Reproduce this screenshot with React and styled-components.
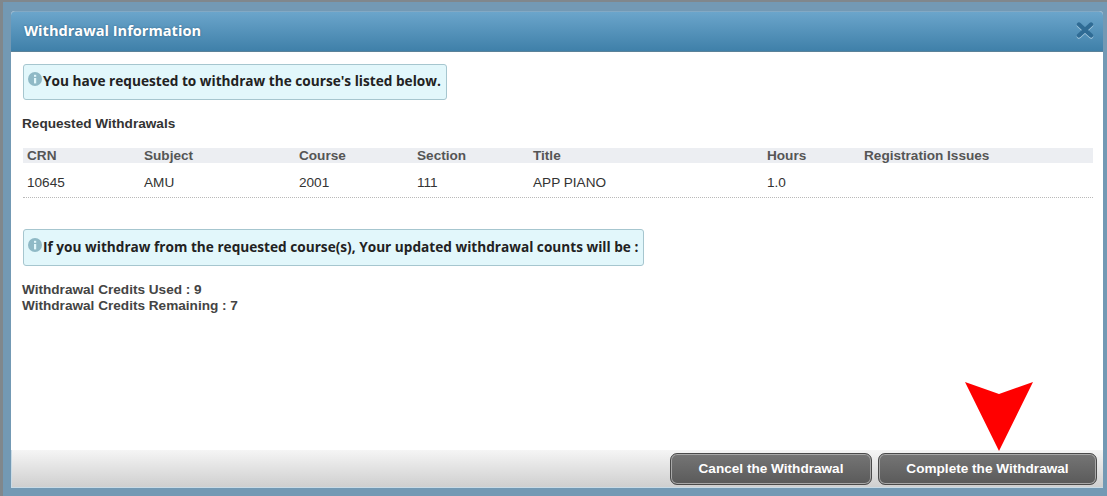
import React from "react"
import styled, { createGlobalStyle } from "styled-components"

const columns = [
    {title: "CRN", value: "10645", width: 117},
    {title: "Subject", value: "AMU", width: 155},
    {title: "Course", value: "2001", width: 118},
    {title: "Section", value: "111", width: 116},
    {title: "Title", value: "APP PIANO", width: 234},
    {title: "Hours", value: "1.0", width: 97},
    {title: "Registration Issues", value: "", width: 233},
]

const GlobalStyle = createGlobalStyle`
    html, body {
        margin: 0;
        padding: 0;
        overflow: hidden;
        background: #7399b4;
    }
`

function InfoIcon() {
    return (
        <Icon viewBox="0 0 14 14">
            <circle cx="7" cy="7" r="7" fill="#8fb9c6" />
            <rect x="6" y="6" width="2.2" height="5.4" fill="#e2f7fb" />
            <rect x="6" y="2.8" width="2.2" height="2" fill="#e2f7fb" />
        </Icon>
    )
}

export default function App() {
    return (
        <Page>
            <GlobalStyle />
            <Dialog>
                <Header>
                    <Title>Withdrawal Information</Title>
                    <CloseIcon viewBox="0 0 18 16">
                        <path d="M3 2.5 L15 13.5 M15 2.5 L3 13.5" stroke="#2f6b94" strokeWidth="4.4" strokeLinecap="round" />
                    </CloseIcon>
                </Header>
                <Body>
                    <Notice>
                        <InfoIcon />
                        <NoticeText>You have requested to withdraw the course's listed below.</NoticeText>
                    </Notice>
                    <SectionTitle>Requested Withdrawals</SectionTitle>
                    <Table>
                        <HeadRow>
                            {columns.map((item, index) => (
                                <HeadCell key={index} $width={item.width}>{item.title}</HeadCell>
                            ))}
                        </HeadRow>
                        <DataRow>
                            {columns.map((item, index) => (
                                <DataCell key={index} $width={item.width}>{item.value}</DataCell>
                            ))}
                        </DataRow>
                    </Table>
                    <SecondNotice>
                        <InfoIcon />
                        <NoticeText>If you withdraw from the requested course(s), Your updated withdrawal counts will be :</NoticeText>
                    </SecondNotice>
                    <Credits>
                        <div>Withdrawal Credits Used : 9</div>
                        <div>Withdrawal Credits Remaining : 7</div>
                    </Credits>
                </Body>
                <Footer>
                    <ActionButton $width={202}>Cancel the Withdrawal</ActionButton>
                    <ActionButton $width={219}>Complete the Withdrawal</ActionButton>
                </Footer>
                <Arrow viewBox="0 0 68 69">
                    <polygon points="0,0 34,12 68,0 34,69" fill="#ff0000" />
                </Arrow>
            </Dialog>
        </Page>
    )
}

const Page = styled.div`
    width: 1107px;
    height: 496px;
    box-sizing: border-box;
    padding: 9px 4px 8px 8px;
    background: #7399b4;
    border-top: 2px solid #80878c;
    border-left: 3px solid #80878c;
    font-family: "Liberation Sans", Arial, sans-serif;
`
const Dialog = styled.div`
    position: relative;
    display: flex;
    flex-direction: column;
    height: 100%;
    background: #ffffff;
    border-radius: 4px 4px 0 0;
`
const Header = styled.div`
    display: flex;
    align-items: center;
    justify-content: space-between;
    height: 41px;
    box-sizing: border-box;
    padding: 0 9px 0 13px;
    background: linear-gradient(#6ba5cb, #3f80a9);
    border-top: 1px solid #83a9c4;
    border-bottom: 1px solid #5b8299;
    border-radius: 4px 4px 0 0;
`
const Title = styled.div`
    margin-top: -3px;
    color: #ffffff;
    font-family: "Open Sans", "DejaVu Sans", sans-serif;
    font-size: 14.6px;
    font-weight: 700;
    text-shadow: 0 0 2px rgba(30, 70, 100, 0.6);
`
const CloseIcon = styled.svg`
    width: 18px;
    height: 16px;
    margin-top: -3px;
    filter: drop-shadow(0 1px 0 #a9cbe0);
`
const Body = styled.div`
    flex: 1;
    padding: 12px 10px 0 11px;
    color: #222222;
    font-size: 13.6px;
`
const Notice = styled.div`
    display: inline-flex;
    align-items: center;
    height: 36px;
    box-sizing: border-box;
    margin-left: 1px;
    padding: 0 5px 3px 4px;
    background: #e2f7fb;
    border: 1px solid #a6c6cf;
    border-radius: 3px;
`
const SecondNotice = styled(Notice)`
    height: 37px;
    margin-top: 31px;
`
const Icon = styled.svg`
    flex: none;
    width: 14px;
    height: 14px;
    margin-top: -3px;
    margin-right: 1px;
`
const NoticeText = styled.span`
    color: #222222;
    font-family: "Open Sans", "DejaVu Sans", sans-serif;
    font-size: 13.65px;
    font-weight: 700;
    white-space: nowrap;
`
const SectionTitle = styled.div`
    margin-top: 17px;
    height: 14px;
    line-height: 14px;
    font-weight: bold;
    color: #333333;
`
const Table = styled.div`
    margin: 17px 0 0 1px;
    width: 1070px;
`
const HeadRow = styled.div`
    display: flex;
    align-items: center;
    height: 15px;
    background: #eceef2;
`
const DataRow = styled.div`
    display: flex;
    align-items: center;
    height: 35px;
    padding-top: 5px;
    border-bottom: 1px dotted #b9b9b9;
    box-sizing: border-box;
`
const HeadCell = styled.div`
    flex: none;
    width: ${props => props.$width}px;
    padding-left: 4px;
    box-sizing: border-box;
    font-weight: bold;
    color: #555555;
    white-space: nowrap;
`
const DataCell = styled.div`
    flex: none;
    width: ${props => props.$width}px;
    padding-left: 4px;
    box-sizing: border-box;
    color: #333333;
`
const Credits = styled.div`
    margin-top: 16px;
    line-height: 16px;
    font-weight: bold;
    color: #444444;
`
const Footer = styled.div`
    display: flex;
    justify-content: flex-end;
    align-items: center;
    gap: 6px;
    height: 38px;
    box-sizing: border-box;
    padding-right: 6px;
    background: linear-gradient(#f5f5f5, #cfcfcf);
    border-left: 1px solid #c9dbe6;
    border-bottom: 1px solid #c9dbe6;
`
const ActionButton = styled.button`
    width: ${props => props.$width}px;
    height: 32px;
    padding: 0;
    border: 1px solid #4a4a4a;
    border-radius: 7px;
    background: linear-gradient(#757575, #5a5a5a);
    box-shadow: inset 0 0 0 1px #a8a8a8;
    color: #ffffff;
    font-family: "Liberation Sans", Arial, sans-serif;
    font-size: 13.6px;
    font-weight: bold;
`
const Arrow = styled.svg`
    position: absolute;
    left: 954px;
    top: 371px;
    width: 68px;
    height: 69px;
`
